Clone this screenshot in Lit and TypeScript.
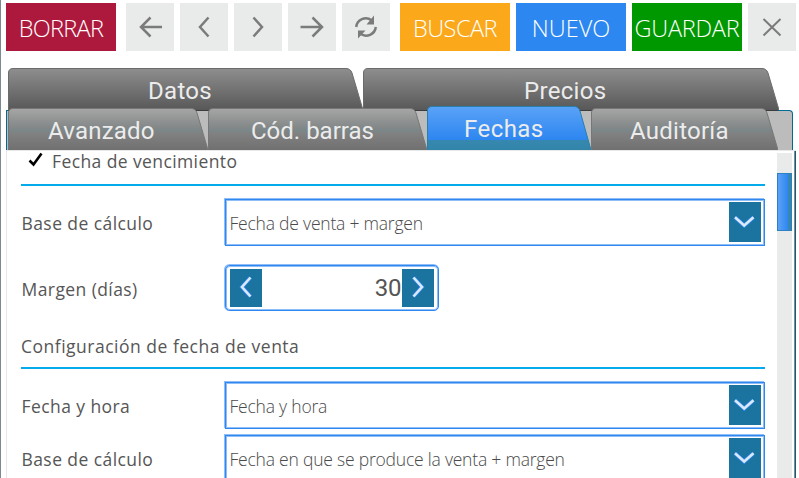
import { LitElement, html, css, svg } from "lit";
import { customElement, property } from "lit/decorators.js";

const icons: Record<string, unknown> = {
  first: svg`<path d="M36 24H15M24.5 14.5L15 24L24.5 33.5"/>`,
  prev: svg`<path d="M28.5 14.5L20 24L28.5 33.5"/>`,
  next: svg`<path d="M19.5 14.5L28 24L19.5 33.5"/>`,
  last: svg`<path d="M12.5 24H34M24.5 14.5L34 24L24.5 33.5"/>`,
  refresh: svg`<path d="M14.2 24A9.7 9.7 0 0 1 29.5 17.2M33.8 24A9.7 9.7 0 0 1 18.5 30.8"/><path class="solid" d="M32 12.5V21.5H24.5ZM16 35.5V27.5H23.5Z"/>`,
  close: svg`<path class="fine" d="M15.5 16L32.5 32.5M32.5 16L15.5 32.5"/>`,
};

@customElement("tool-button")
class ToolButton extends LitElement {
  @property() icon = "";
  static styles = css`
    :host { display: flex; width: 48px; height: 48px; background: #e9ebea; flex: none; }
    svg { width: 48px; height: 48px; fill: none; stroke: #7b7b7b; stroke-width: 2.5; }
    .solid { fill: #7b7b7b; stroke: none; }
    .fine { stroke-width: 2; }
  `;
  render() {
    return html`<svg viewBox="0 0 48 48">${icons[this.icon]}</svg>`;
  }
}

@customElement("folder-tab")
class FolderTab extends LitElement {
  @property({ type: Number }) w = 200;
  @property({ type: Number }) h = 42;
  @property() kind = "front";
  static styles = css`
    :host { display: grid; flex: none; }
    svg, span { grid-area: 1 / 1; }
    svg { display: block; }
    span {
      font: 24px/1 Roboto, sans-serif; color: #ececec; white-space: nowrap;
      align-self: start; justify-self: start; z-index: 1;
    }
  `;
  render() {
    const { w, h, kind } = this;
    const active = kind === "active";
    const d = `M.5 ${h}V5Q.5 .5 5 .5H${w - 17}Q${w - 12.5} .5 ${w - 11} 5L${w} ${h}`;
    const stops =
      kind === "back"
        ? svg`<stop offset="0" stop-color="#8e8e8e"/><stop offset="1" stop-color="#585858"/>`
        : active
          ? svg`<stop offset="0" stop-color="#5aa2f7"/><stop offset=".77" stop-color="#2d86f0"/><stop offset=".77" stop-color="#3788ae"/><stop offset="1" stop-color="#3184aa"/>`
          : svg`<stop offset="0" stop-color="#a6a6a6"/><stop offset=".45" stop-color="#848888"/><stop offset=".52" stop-color="#7b8789"/><stop offset=".62" stop-color="#808080"/><stop offset="1" stop-color="#707070"/>`;
    return html`<svg width=${w} height=${h}>
        <defs><linearGradient id="g" x1="0" y1="0" x2="0" y2="1">${stops}</linearGradient></defs>
        <path d=${d + "Z"} fill="url(#g)" />
        <path d=${d} fill="none" stroke=${active ? "#2780aa" : kind === "back" ? "#6b6b6b" : "#777"} />
      </svg>
      <span part="text"><slot></slot></span>`;
  }
}

@customElement("select-box")
class SelectBox extends LitElement {
  static styles = css`
    :host {
      display: flex; align-items: center; box-sizing: border-box; width: 540px; height: 47px;
      margin: 1px 0 0 1px; padding: 0 3px 0 4px; background: #fff; border: 1px solid #2f87f0;
      box-shadow: inset 0 0 0 1px #8fbdf8, -1px -1px 0 #8fbdf8;
      font: 300 17.5px "Open Sans", sans-serif; letter-spacing: -.21px; color: #4a4a4a;
    }
    .text { flex: 1; white-space: nowrap; padding-top: 1px; margin-left: -.5px; }
    svg { width: 32px; height: 40px; background: #1a749f; margin-top: -1px; }
    path { fill: none; stroke: #2f87f0; stroke-width: 4; }
    .top { stroke: #dce9fb; stroke-width: 2.6; }
  `;
  render() {
    return html`<span class="text"><slot></slot></span>
      <svg viewBox="0 0 32 40"><path d="M6 15.3L15.2 23.5L24.5 15.3"/><path class="top" d="M6 15.3L15.2 23.5L24.5 15.3"/></svg>`;
  }
}

@customElement("number-stepper")
class NumberStepper extends LitElement {
  @property({ type: Number }) value = 0;
  static styles = css`
    :host {
      display: flex; box-sizing: border-box; width: 214px; height: 46px; margin: 1px 0 0 1px;
      padding: 3px 4px; background: #fff; border: 1px solid #2f87f0; border-radius: 5px;
      box-shadow: inset 0 0 0 1px #8fbdf8, -.5px -.5px 0 .5px #8fbdf8;
    }
    svg { width: 32px; height: 38px; background: #1a749f; }
    path { fill: none; stroke: #2f87f0; stroke-width: 4; }
    .top { stroke: #dce9fb; stroke-width: 2.6; }
    .value { flex: 1; text-align: right; padding-right: 1px; margin-left: -1px; font: 24px/38px Roboto, sans-serif; letter-spacing: -.4px; color: #555; }
  `;
  render() {
    const arrow = (d: string) =>
      html`<svg viewBox="0 0 32 38"><path d=${d} /><path class="top" d=${d} /></svg>`;
    return html`${arrow("M20.5 8.5L12 18L20.5 27.5")}<span class="value">${this.value}</span>${arrow("M11.5 8.5L20 18L11.5 27.5")}`;
  }
}

@customElement("app-root")
class AppRoot extends LitElement {
  static styles = css`
    :host {
      display: block; box-sizing: border-box; width: 799px; height: 478px; overflow: hidden;
      background: #fff; border-left: 1px solid #7b8992; font-family: "Open Sans", sans-serif;
    }
    .toolbar { display: flex; gap: 6px; padding: 3px 0 0 5px; height: 65px; box-sizing: border-box; }
    .action {
      width: 110px; height: 48px; flex: none; color: #fff; white-space: nowrap;
      font: 300 23.5px/50px "Open Sans", sans-serif; display: flex; justify-content: center;
    }
    .red { background: #ad193c; margin-right: 4px; letter-spacing: -.7px; }
    .orange { background: #fba81a; margin-left: 4px; letter-spacing: -.5px; }
    .blue { background: #2d87f0; letter-spacing: 0; }
    .green { background: #009800; letter-spacing: -.25px; }
    .tabs { display: flex; align-items: flex-start; box-sizing: border-box; height: 45px; padding: 3px 0 0 7px; }
    .front {
      position: relative; height: 40px; width: 787px; margin-left: 5px; padding-left: 1px; box-sizing: border-box;
      background: #bcbcbc; border: 1px solid #006a94; border-bottom: 0; border-top-right-radius: 4px;
      display: flex; align-items: flex-end;
    }
    .front::before { content: ""; position: absolute; left: 1px; top: -1px; width: 770px; height: 1px; background: #3c3c3c; }
    .front folder-tab { position: relative; }
    folder-tab::part(text) { letter-spacing: .15px; }
    .datos::part(text) { margin: 11px 0 0 140px; letter-spacing: .3px; }
    .precios::part(text) { margin: 11px 0 0 161px; letter-spacing: .3px; }
    .avanzado::part(text) { margin: 11px 0 0 40px; letter-spacing: .2px; }
    .barras::part(text) { margin: 11px 0 0 43px; letter-spacing: 0; }
    .fechas::part(text) { margin: 11px 0 0 37px; letter-spacing: .45px; }
    .auditoria::part(text) { margin: 11px 0 0 39px; letter-spacing: .25px; }
    .body {
      display: flex; height: 328px; margin-left: 5px; width: 790px; box-sizing: border-box;
      border: 1px solid #e8e8e8; border-width: 1px 0 0 1px; overflow: hidden;
    }
    .form { width: 744px; margin-left: 14px; flex: none; font-size: 17.5px; color: #565656; }
    .head { display: flex; align-items: flex-end; box-sizing: border-box; border-bottom: 2px solid #04abea; white-space: nowrap; letter-spacing: .5px; }
    .head.one { height: 35px; padding: 0 0 11px 7px; gap: 8px; letter-spacing: .4px; }
    .head.two { height: 57px; padding-bottom: 9px; margin-bottom: 12px; }
    .row { display: grid; grid-template-columns: 203px 1fr; height: 48px; }
    .label { align-self: center; padding: 2px 0 0 .5px; letter-spacing: .42px; white-space: nowrap; }
    .check { width: 16px; height: 16px; margin-bottom: 5px; fill: none; stroke: #000; stroke-width: 2.6; }
    .r1 { margin-top: 12px; }
    .r2 { margin-top: 18px; }
    .r4 { margin-top: 5px; }
    .track { width: 15px; margin: 2px 0 0 12px; padding-top: 20px; background: #e9ebea; }
    .thumb { height: 58px; box-sizing: border-box; border: 1px solid #2f80c0; background: linear-gradient(90deg, #5aa2f7, #2d86f0 80%, #3788ae 80%); }
    .edge { width: 1px; height: 328px; margin: -1px 0 0 2px; border-left: 1px solid #8a8a8a; background: #0b5f80; }
  `;
  render() {
    return html`
      <div class="toolbar">
        <div class="action red">BORRAR</div>
        ${["first", "prev", "next", "last", "refresh"].map((i) => html`<tool-button icon=${i}></tool-button>`)}
        <div class="action orange">BUSCAR</div>
        <div class="action blue">NUEVO</div>
        <div class="action green">GUARDAR</div>
        <tool-button icon="close"></tool-button>
      </div>
      <div class="tabs">
        <folder-tab class="datos" kind="back" w="355" h="42">Datos</folder-tab>
        <folder-tab class="precios" kind="back" w="416" h="42">Precios</folder-tab>
      </div>
      <div class="front">
        <folder-tab class="avanzado" w="200">Avanzado</folder-tab>
        <folder-tab class="barras" w="219">Cód. barras</folder-tab>
        <folder-tab class="fechas" kind="active" w="164" h="44">Fechas</folder-tab>
        <folder-tab class="auditoria" w="187">Auditoría</folder-tab>
      </div>
      <div class="body">
        <div class="form">
          <div class="head one">
            <svg class="check" viewBox="0 0 16 16"><path d="M1.5 8.5L5.5 12.5L13.5 1.5" /></svg>
            <span>Fecha de vencimiento</span>
          </div>
          <div class="row r1"><span class="label">Base de cálculo</span><select-box>Fecha de venta + margen</select-box></div>
          <div class="row r2"><span class="label">Margen (días)</span><number-stepper value="30"></number-stepper></div>
          <div class="head two"><span>Configuración de fecha de venta</span></div>
          <div class="row"><span class="label">Fecha y hora</span><select-box>Fecha y hora</select-box></div>
          <div class="row r4"><span class="label">Base de cálculo</span><select-box>Fecha en que se produce la venta + margen</select-box></div>
        </div>
        <div class="track"><div class="thumb"></div></div>
        <div class="edge"></div>
      </div>
    `;
  }
}
